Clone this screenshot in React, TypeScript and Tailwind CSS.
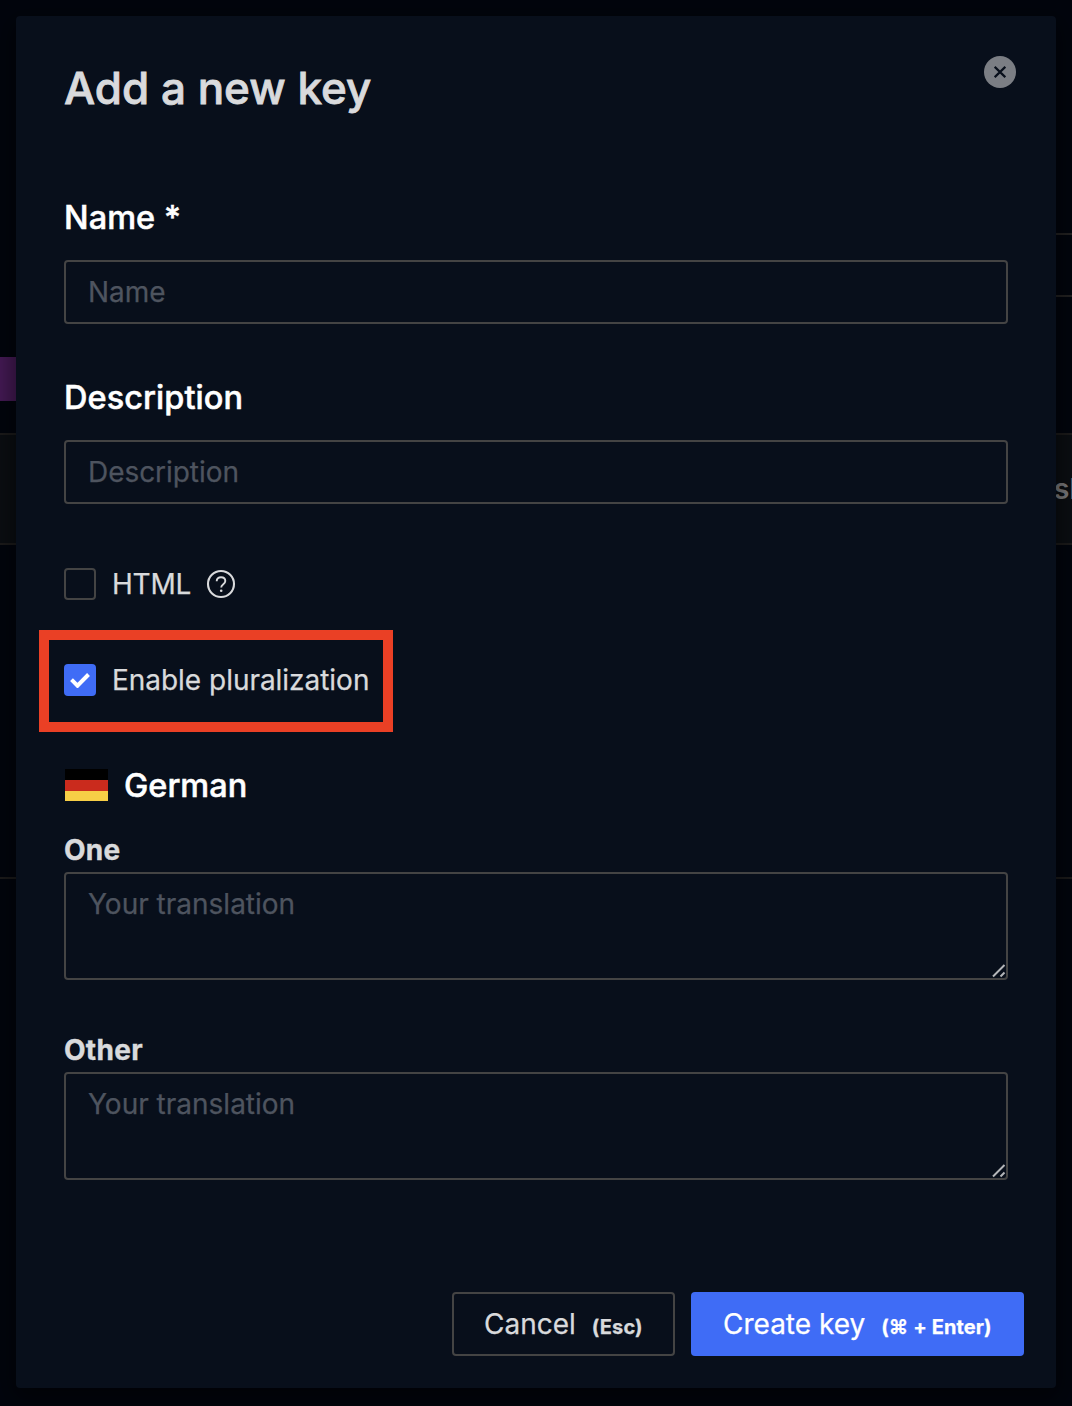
import React from "react";

function Field({ label, gapClass }: { label: string; gapClass: string }) {
  return (
    <label className={`block ${gapClass}`}>
      <span className="block h-[48px] pt-[2px] text-[32.5px] leading-[40px] font-medium tracking-[0.05px] text-white [-webkit-text-stroke:0.5px]">
        {label}
        {label === "Name" ? " *" : ""}
      </span>
      <input
        placeholder={label}
        className="mt-[16px] block h-[64px] w-full rounded-[4px] border-2 border-[#444444] bg-transparent px-[22px] text-[28px] tracking-[-0.05px] text-[#d9dadc] outline-none placeholder:text-[#4e545f]"
      />
    </label>
  );
}

function Plural({ label }: { label: string }) {
  return (
    <label className="block h-[152px]">
      <span className="block h-[44px] text-[28px] leading-[44px] font-bold tracking-[0.3px] text-[#d9dadc] [-webkit-text-stroke:0.4px]">
        {label}
      </span>
      <span className="relative block h-[108px] [-webkit-text-stroke:0.25px]">
        <textarea
          placeholder="Your translation"
          className="block h-[108px] w-full resize-none overflow-hidden rounded-[4px] border-2 border-[#444444] bg-transparent px-[22px] py-[9px] text-[28px] leading-[42px] text-[#d9dadc] outline-none placeholder:text-[#4e545f]"
        />
        <svg className="absolute right-[2px] bottom-[2px] h-[14px] w-[14px]" viewBox="0 0 14 14" fill="none">
          <path d="M1 12.5 12.5 1M8.5 12.5l4-4" stroke="#b4b6b9" strokeWidth="2" />
        </svg>
      </span>
    </label>
  );
}

function Backdrop() {
  return (
    <div className="absolute inset-0 overflow-hidden">
      <div className="mt-[233px] ml-[536px] h-[64px] border-y-2 border-[#232222]" />
      <div className="mt-[60px] h-[44px] w-[24px] bg-[#451a55]" />
      <div className="mt-[32px] flex h-[112px] items-center justify-end border-y-2 border-[#1c1b1b] bg-[#0b0e12]">
        <span className="w-[18px] text-[28px] font-semibold whitespace-nowrap text-[#7c7c7e]">sh</span>
      </div>
      <div className="mt-[332px] h-[2px] bg-[#1c1b1b]" />
    </div>
  );
}

export default function App() {
  return (
    <div className="relative h-[1406px] w-[1072px] overflow-hidden bg-[#02050d] p-[16px] font-['Inter',sans-serif]">
      <Backdrop />
      <main className="relative h-[1372px] rounded-[4px] bg-[#080f1b] pr-[32px] pl-[48px] shadow-[0_8px_24px_4px_rgba(0,0,0,0.5)] [-webkit-text-stroke:0.25px]">
        <header className="flex h-[180px] justify-between pt-[40px] pr-[8px]">
          <h1 className="h-[64px] text-[44px] leading-[64px] font-medium tracking-[-0.01px] text-[#d9dadc] [-webkit-text-stroke:0.8px]">
            Add a new key
          </h1>
          <button aria-label="Close" className="flex h-[32px] w-[32px] items-center justify-center rounded-full bg-[#7b7e84]">
            <svg className="h-[12px] w-[12px]" viewBox="0 0 12 12" fill="none">
              <path d="M.7.8l10.6 10.4M11.3.8.7 11.2" stroke="#080f1b" strokeWidth="2.2" />
            </svg>
          </button>
        </header>
        <form className="w-[944px]" onSubmit={(e) => e.preventDefault()}>
          <Field label="Name" gapClass="h-[180px]" />
          <Field label="Description" gapClass="h-[192px]" />
          <div className="flex h-[32px] items-center">
            <span className="h-[32px] w-[32px] rounded-[4px] border-2 border-[#444444]" />
            <span className="ml-[16px] w-[78px] text-[28px] tracking-[-0.2px] text-[#d9dadc]">HTML</span>
            <svg className="ml-[16px] h-[30px] w-[30px]" viewBox="0 0 30 30" fill="none" stroke="#d9dadc">
              <circle cx="15" cy="15" r="13" strokeWidth="2.1" />
              <path d="M10.7 12.2c0-2.5 1.8-4 4.3-4s4.3 1.5 4.3 3.8c0 3.3-4.1 3-4.1 6.5" strokeWidth="1.9" />
              <circle cx="15.2" cy="21.7" r="1.3" fill="#d9dadc" stroke="none" />
            </svg>
          </div>
          <div className="mt-[30px] -ml-[25px] flex h-[102px] w-[354px] items-center border-[10px] border-[#ea4025] pb-[2px] pl-[15px]">
            <span className="flex h-[32px] w-[32px] items-center justify-center rounded-[4px] bg-[#3f6cf6]">
              <svg className="h-[16px] w-[20px]" viewBox="0 0 20 16" fill="none">
                <path d="M1.5 7.7 7.5 13.7 18.5 2.5" stroke="white" strokeWidth="4" />
              </svg>
            </span>
            <span className="ml-[16px] text-[28px] tracking-[-0.03px] whitespace-nowrap text-[#d9dadc]">Enable pluralization</span>
          </div>
          <div className="mt-[34px] flex h-[40px] items-center">
            <svg className="mb-[2px] ml-[1px] h-[32px] w-[43px]" viewBox="0 0 43 32" shapeRendering="crispEdges">
              <rect width="43" height="11" fill="#000" />
              <rect y="11" width="43" height="10.6" fill="#ca2b1d" />
              <rect y="21.6" width="43" height="10.4" fill="#f7ce46" />
            </svg>
            <h2 className="ml-[16px] text-[32.5px] leading-[40px] font-medium text-white [-webkit-text-stroke:0.5px]">German</h2>
          </div>
          <div className="mt-[22px] flex flex-col gap-[48px]">
            <Plural label="One" />
            <Plural label="Other" />
          </div>
        </form>
        <footer className="mt-[112px] flex justify-end gap-[16px]">
          <button className="flex h-[64px] w-[223px] items-baseline rounded-[4px] border-2 border-[#444444] pl-[30px] text-[28px] leading-[60px] text-[#d9dadc]">
            Cancel<span className="ml-[16px] text-[20px] font-bold tracking-[0.1px]">(Esc)</span>
          </button>
          <button className="flex h-[64px] w-[333px] items-baseline rounded-[4px] bg-[#3f6cf6] pl-[32px] text-[28px] leading-[64px] whitespace-nowrap text-white">
            Create key<span className="ml-[16px] text-[20px] font-bold tracking-[0.1px]">(⌘ + Enter)</span>
          </button>
        </footer>
      </main>
    </div>
  );
}
